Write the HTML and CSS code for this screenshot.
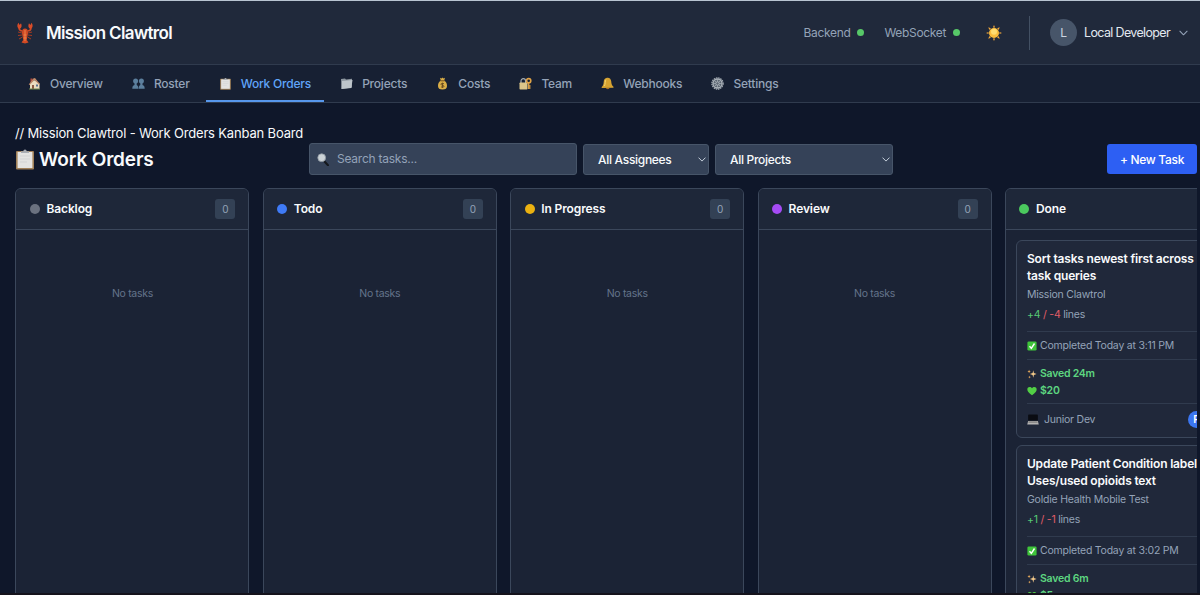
FILE: index.html
```html
<!DOCTYPE html>
<html lang="en">
<head>
    <meta charset="UTF-8">
    <meta name="viewport" content="width=device-width, initial-scale=1.0">
    <title>Mission Clawtrol</title>
    <link rel="stylesheet" href="styles.css">
</head>
<body>
    <!-- shared icons -->
    <svg class="defs" width="0" height="0">
        <symbol id="clipboard" viewBox="0 0 20 22">
            <rect x="1" y="3" width="18" height="18.5" rx="1" fill="#a08058"/>
            <rect x="2.6" y="4" width="14.8" height="16" fill="#e4e4e2"/>
            <path d="M5 8h10M5 11h10M5 14h7" stroke="#d3d4d4" stroke-width="1"/>
            <path d="M6 5V3.2h2.3a1.7 1.7 0 0 1 3.4 0H14V5z" fill="#a9adb3"/>
        </symbol>
        <symbol id="check" viewBox="0 0 12 12">
            <rect x=".5" y=".5" width="11" height="11" rx="1.6" fill="#3fc53a"/>
            <path d="M3 6.4l2.2 2.4L9 3" fill="none" stroke="#fff" stroke-width="1.7"/>
        </symbol>
        <symbol id="sparkles" viewBox="0 0 12 12">
            <path d="M7.500 1.500l.8 3.200L11.500 6l-3.200 1.300-.8 3.200-.8-3.200L3.500 6l3.200-1.300z" fill="#f3c98a"/>
            <path d="M2.500 1l.6 1.400 1.400.6-1.400.6L2.500 5l-.6-1.400L.5 3l1.400-.6zM3 8l.5 1.200 1.200.5-1.200.5L3 11.400l-.5-1.200-1.200-.5 1.200-.5z" fill="#e5a95a"/>
        </symbol>
        <symbol id="heart" viewBox="0 0 12 12">
            <path d="M6 11C2.500 8.500.4 6.300.4 4.100.4 1.100 4.300.3 6 2.800c1.700-2.500 5.600-1.700 5.600 1.300C11.600 6.300 9.500 8.500 6 11z" fill="#52cf45"/>
        </symbol>
        <symbol id="laptop" viewBox="0 0 13 12">
            <path d="M2 .5h9a.8.8 0 0 1 .8.8V7H1.200V1.300A.8.8 0 0 1 2 .5z" fill="#0a0c12"/>
            <path d="M1.200 7.500h10.600l1 4H.2z" fill="#b5b4b3"/>
            <path d="M1.500 8.800h10" stroke="#666" stroke-width="1"/>
        </symbol>
        <symbol id="chevron" viewBox="0 0 10 6">
            <path d="M1 1l4 4 4-4" fill="none" stroke="currentColor" stroke-width="1.200" stroke-linecap="round" stroke-linejoin="round"/>
        </symbol>
    </svg>

    <div class="page">
        <header class="header">
            <div class="brand">
                <svg class="lobster" viewBox="0 0 18 22">
                    <g fill="none" stroke="#a53a20" stroke-width="1">
                        <path d="M6 11L2 10M6 13l-4 .5M6.500 15L3 17M12 11l4-1M12 13l4 .5M11.500 15l3.500 2"/>
                        <path d="M6.500 9C4 9 3 7.500 3 5.500M11.500 9C14 9 15 7.500 15 5.500" stroke="#cf4a25" stroke-width="1.600"/>
                    </g>
                    <path d="M3.800 7C1 6 .7 3 2.500.7L3.600 3 5 1.200C6.200 3.500 5.600 6 3.800 7zM14.200 7c2.800-1 3.100-4 1.300-6.300L14.400 3 13 1.200c-1.200 2.300-.6 4.800 1.200 5.800z" fill="#d94c28"/>
                    <path d="M9 6.500c2 0 3 1.500 3 4 0 3-1 4-1.200 7.500l1.700 2.500L9 21.500l-3.500-1L7.200 18C7 14.500 6 13.500 6 10.500c0-2.500 1-4 3-4z" fill="#d24a24"/>
                    <path d="M9 8v11M7.500 13h3M7.500 16h3" stroke="#ee8248" stroke-width="1"/>
                </svg>
                <span class="brand-name">Mission Clawtrol</span>
            </div>
            <div class="header-right">
                <div class="status">Backend <span class="online"></span></div>
                <div class="status">WebSocket <span class="online"></span></div>
                <svg class="sun" viewBox="0 0 16 16">
                    <path d="M8 0l1.100 2.500H6.900zM8 16l1.100-2.500H6.900zM0 8l2.500-1.100v2.200zM16 8l-2.500-1.100v2.200zM2.300 2.300l2.600 1-1.600 1.600zM13.700 2.300l-2.600 1 1.600 1.600zM2.300 13.700l2.600-1-1.600-1.600zM13.700 13.700l-2.600-1 1.600-1.600z" fill="#f0a63a"/>
                    <circle cx="8" cy="8" r="5" fill="#fbbd3c"/>
                    <circle cx="8" cy="6.800" r="3" fill="#ffdc70"/>
                </svg>
                <div class="user">
                    <span class="avatar">L</span>
                    <span class="user-name">Local Developer</span>
                    <svg class="user-arrow"><use href="#chevron"/></svg>
                </div>
            </div>
        </header>

        <nav class="nav">
            <a class="tab">
                <svg viewBox="0 0 13 13"><path d="M2.500 1.500h2V5h-2z" fill="#b5493a"/><path d="M2 6.500L6 3l5.500 3.500V12H2z" fill="#eadcc0"/><path d="M.7 7.500L5.300 1.500 7 1l5 6.200-.8.5L6.500 3 1.500 8z" fill="#c08a69"/><path d="M4 8h2v4H4z" fill="#8c5a42"/><path d="M8 7.500h2v2H8z" fill="#59718e"/><path d="M1 11.500h11v1H1z" fill="#71884f"/></svg>
                <span>Overview</span>
            </a>
            <a class="tab">
                <svg viewBox="0 0 13 13"><g fill="#5c7f9d"><circle cx="3.600" cy="4" r="2.500"/><circle cx="9.400" cy="4" r="2.500"/><path d="M2.500 6h2.200v2c1 .4 1.600 1.200 1.600 3.700H.3c0-2.500.8-3.200 2.200-3.700zM8.300 6h2.200v2c1.400.5 2.200 1.200 2.200 3.700h-6c0-2.500.6-3.300 1.600-3.700z"/></g></svg>
                <span>Roster</span>
            </a>
            <a class="tab active">
                <svg><use href="#clipboard"/></svg>
                <span>Work Orders</span>
            </a>
            <a class="tab">
                <svg viewBox="0 0 13 13"><path d="M1 2l4-.5 1 1 6-.8v8.800L1.500 12z" fill="#8d969f"/><path d="M2 4l10.500-1L11.300 11 1.500 12z" fill="#bdc4ca"/></svg>
                <span>Projects</span>
            </a>
            <a class="tab">
                <svg viewBox="0 0 13 13"><path d="M4 .8l1.500.8L6.500.5l1 1L9 .8 8.200 3.500C10.500 5 11 7 11 9c0 2.500-1.500 3.500-4.500 3.500S2 11.500 2 9c0-2 .5-4 2.800-5.500z" fill="#d9ad47"/><path d="M4.500 3.800h4" stroke="#75521f"/><path d="M8 6.800C6.500 5.900 5 6.300 5 7.300c0 1.300 3 .7 3 2 0 1-1.700 1.300-3 .5M6.500 5.800v5" fill="none" stroke="#65491f" stroke-width=".9"/></svg>
                <span>Costs</span>
            </a>
            <a class="tab">
                <svg viewBox="0 0 13 13"><path d="M2 7V4a2.300 2.300 0 0 1 4.600 0v3" fill="none" stroke="#a7adb2" stroke-width="1.200"/><rect x=".5" y="5.500" width="8" height="7" rx=".7" fill="#dcc58a"/><circle cx="9.700" cy="3.700" r="2.100" fill="none" stroke="#e0a347" stroke-width="1.600"/><path d="M9.700 6v6M9.700 9h1.800M9.700 11h1.800" stroke="#e0a347" stroke-width="1.300"/></svg>
                <span>Team</span>
            </a>
            <a class="tab">
                <svg viewBox="0 0 13 13"><path d="M6 .8c2.500-.4 4 1.200 4.200 3.500.2 2.700.6 4.200 2.300 5.500v1L.7 11v-1c1.500-1.300 1.900-3 2-5C2.800 2.500 4 1.100 6 .8z" fill="#d7a331"/><path d="M5 11h3.500c-.3 1.600-3.200 1.600-3.500 0z" fill="#a56b25"/><path d="M5 2.500C4 4 4.300 7 3.500 9" fill="none" stroke="#f5d56e"/></svg>
                <span>Webhooks</span>
            </a>
            <a class="tab">
                <svg viewBox="0 0 13 13"><circle cx="6.500" cy="6.500" r="5.600" fill="none" stroke="#a3abb3" stroke-width="1.300" stroke-dasharray="1.500 .7"/><circle cx="6.500" cy="6.500" r="4.500" fill="#5d6773" stroke="#aab1b8" stroke-width="1.300"/><circle cx="6.500" cy="6.500" r="1.700" fill="none" stroke="#aab1b8"/><path d="M6.500 2v3M6.500 8v3M2 6.500h3M8 6.500h3M3.300 3.300l2 2M7.700 7.700l2 2M9.700 3.300l-2 2M5.300 7.700l-2 2" stroke="#a1aab3" stroke-width=".8"/></svg>
                <span>Settings</span>
            </a>
        </nav>

        <main class="main">
            <div class="crumb">// Mission Clawtrol - Work Orders Kanban Board</div>
            <div class="toolbar">
                <h1><svg><use href="#clipboard"/></svg>Work Orders</h1>
                <div class="search">
                    <svg viewBox="0 0 12 13"><path d="M7 8l4 4.300" stroke="#15181d" stroke-width="2" stroke-linecap="round"/><circle cx="4.700" cy="4.700" r="3.900" fill="#cbd2d6" stroke="#929ba3" stroke-width=".8"/></svg>
                    <span>Search tasks...</span>
                </div>
                <div class="select assignees"><span>All Assignees</span><svg><use href="#chevron"/></svg></div>
                <div class="select projects"><span>All Projects</span><svg><use href="#chevron"/></svg></div>
                <button type="button" class="new-task">+ New Task</button>
            </div>

            <div class="board">
                <section class="column">
                    <div class="column-head"><span class="dot gray"></span><h2>Backlog</h2><span class="count">0</span></div>
                    <p class="empty">No tasks</p>
                </section>
                <section class="column">
                    <div class="column-head"><span class="dot blue"></span><h2>Todo</h2><span class="count">0</span></div>
                    <p class="empty">No tasks</p>
                </section>
                <section class="column">
                    <div class="column-head"><span class="dot yellow"></span><h2>In Progress</h2><span class="count">0</span></div>
                    <p class="empty">No tasks</p>
                </section>
                <section class="column">
                    <div class="column-head"><span class="dot purple"></span><h2>Review</h2><span class="count">0</span></div>
                    <p class="empty">No tasks</p>
                </section>
                <section class="column">
                    <div class="column-head"><span class="dot green"></span><h2>Done</h2></div>
                    <div class="cards">
                        <article class="card">
                            <h3>Sort tasks newest first across<br>task queries</h3>
                            <p class="project">Mission Clawtrol</p>
                            <p class="lines"><span class="add">+4</span> <span class="del">/ -4</span> lines</p>
                            <div class="completed"><svg><use href="#check"/></svg>Completed Today at 3:11 PM</div>
                            <div class="saved">
                                <div><svg><use href="#sparkles"/></svg>Saved 24m</div>
                                <div><svg><use href="#heart"/></svg>$20</div>
                            </div>
                            <div class="owner"><svg><use href="#laptop"/></svg>Junior Dev<span class="badge">P</span></div>
                        </article>
                        <article class="card">
                            <h3>Update Patient Condition label<br>Uses/used opioids text</h3>
                            <p class="project">Goldie Health Mobile Test</p>
                            <p class="lines"><span class="add">+1</span> <span class="del">/ -1</span> lines</p>
                            <div class="completed"><svg><use href="#check"/></svg>Completed Today at 3:02 PM</div>
                            <div class="saved">
                                <div><svg><use href="#sparkles"/></svg>Saved 6m</div>
                                <div><svg><use href="#heart"/></svg>$5</div>
                            </div>
                        </article>
                    </div>
                </section>
            </div>
        </main>
    </div>
</body>
</html>
```
FILE: styles.css
```css
* {
	box-sizing: border-box;
}
body {
	margin: 0;
	background-color: #0f172a;
	color: #f8fafc;
	font-family: Inter, "Liberation Sans", sans-serif;
	font-size: 12px;
	overflow: hidden;
}
h1, h2, h3, p {
	margin: 0;
}
svg {
	flex: none;
}
.defs {
	display: block;
}
.page {
	height: 595px;
	display: flex;
	flex-direction: column;
	overflow: hidden;
	border-bottom: 2px solid #15131c;
}

/* header */
.header {
	height: 65px;
	flex: none;
	display: flex;
	align-items: center;
	justify-content: space-between;
	padding: 0 12px 0 16px;
	background-color: #20293b;
	border-top: 1px solid #b8c4d1;
	border-bottom: 1px solid #303b4e;
}
.brand, .header-right, .status, .user {
	display: flex;
	align-items: center;
}
.lobster {
	width: 18px;
	height: 22px;
	margin-right: 12px;
}
.brand-name {
	font-size: 17px;
	font-weight: 600;
	letter-spacing: -0.65px;
}
.status {
	gap: 7px;
	margin-right: 20px;
	color: #94a3b8;
	font-size: 12px;
	letter-spacing: -0.33px;
}
.online {
	width: 7px;
	height: 7px;
	border-radius: 50%;
	background-color: #57c868;
}
.sun {
	width: 16px;
	height: 16px;
	margin: 0 27px 0 6px;
}
.user {
	height: 34px;
	padding-left: 20px;
	border-left: 1px solid #435063;
}
.avatar {
	width: 27px;
	height: 27px;
	border-radius: 50%;
	background-color: #475569;
	color: #cbd5e1;
	line-height: 27px;
	text-align: center;
}
.user-name {
	margin: 0 9px 0 7px;
	color: #e2e8f0;
	font-size: 12.5px;
	letter-spacing: -0.65px;
}
.user-arrow {
	width: 9px;
	height: 6px;
	color: #94a3b8;
}

/* nav tabs */
.nav {
	height: 38px;
	flex: none;
	display: flex;
	gap: 3.2px;
	padding-left: 15px;
	background-color: #172033;
	border-bottom: 1px solid #303b4e;
}
.tab {
	display: flex;
	align-items: center;
	gap: 9px;
	padding: 2px 13px 0;
	color: #94a3b8;
	font-size: 12px;
	font-weight: 500;
	letter-spacing: -0.22px;
	border-bottom: 2px solid transparent;
}
.tab svg {
	width: 13px;
	height: 13px;
}
.tab.active {
	color: #60a5fa;
	border-bottom-color: #5797ec;
}

/* page title and filters */
.main {
	flex: 1;
	min-height: 0;
	width: 1197px;
	padding: 22px 0 0 15px;
	overflow: hidden;
}
.crumb {
	height: 18px;
	line-height: 17px;
	font-size: 13px;
	letter-spacing: -0.17px;
	white-space: nowrap;
}
.toolbar {
	height: 32px;
	display: flex;
	align-items: center;
}
h1 {
	width: 294px;
	display: flex;
	align-items: center;
	font-size: 19px;
	font-weight: 600;
	letter-spacing: -0.15px;
}
h1 svg {
	width: 20px;
	height: 22px;
	margin-right: 4px;
}
.search, .select {
	display: flex;
	align-items: center;
	background-color: #354258;
	border: 1px solid #475569;
	border-radius: 3px;
}
.search {
	width: 268px;
	height: 32px;
	padding-left: 7px;
	color: #94a3b8;
	letter-spacing: -0.24px;
}
.search svg {
	width: 12px;
	height: 13px;
	margin-right: 8px;
}
.search span {
	padding-bottom: 1px;
}
.select {
	height: 31px;
	justify-content: space-between;
	margin-left: 6px;
	padding: 0 2px 0 14px;
	font-weight: 500;
	letter-spacing: -0.3px;
}
.select svg {
	width: 8px;
	height: 5px;
	color: #cbd5e1;
}
.assignees {
	width: 126px;
}
.projects {
	width: 178px;
}
.new-task {
	width: 90px;
	height: 30px;
	margin-left: auto;
	padding: 0;
	border: none;
	border-radius: 3px;
	background-color: #2d5ff3;
	color: white;
	font-family: inherit;
	font-size: 12px;
	font-weight: 500;
	letter-spacing: -0.3px;
}

/* kanban board */
.board {
	display: flex;
	gap: 13.4px;
	height: 420px;
	margin: 13px 0 0 0.4px;
}
.column {
	width: 234px;
	flex: none;
	border: 1px solid #3b475b;
	border-radius: 6px;
	background-color: #1b2335;
}
.column-head {
	height: 41px;
	display: flex;
	align-items: center;
	padding: 0 13px 0 13.5px;
	border-bottom: 1px solid #3b475b;
	border-radius: 5px 5px 0 0;
	background-color: #1e2739;
}
.dot {
	width: 10px;
	height: 10px;
	margin-right: 6.5px;
	border-radius: 50%;
}
.gray { background-color: #6b7280; }
.blue { background-color: #3f7bf7; }
.yellow { background-color: #eab111; }
.purple { background-color: #a54bf5; }
.green { background-color: #4bc95e; }
h2 {
	padding-bottom: 1px;
	font-size: 12px;
	font-weight: 600;
	letter-spacing: -0.1px;
}
.count {
	width: 20px;
	height: 20px;
	margin-left: auto;
	border-radius: 3px;
	background-color: #334155;
	color: #94a3b8;
	font-size: 10px;
	line-height: 20px;
	text-align: center;
}
.empty {
	margin-top: 57px;
	color: #64748b;
	font-size: 10.5px;
	letter-spacing: -0.3px;
	line-height: 14px;
	text-align: center;
}

/* done cards */
.cards {
	padding: 10px;
}
.card {
	height: 198px;
	margin-bottom: 7px;
	padding: 9px 10px;
	border: 1px solid #3b475b;
	border-radius: 6px;
	background-color: #20283a;
	color: #94a3b8;
	font-size: 10.5px;
	letter-spacing: -0.22px;
	white-space: nowrap;
}
h3 {
	height: 36px;
	color: #f8fafc;
	font-size: 12px;
	font-weight: 600;
	line-height: 17px;
	letter-spacing: -0.18px;
}
.project {
	height: 18px;
	line-height: 18px;
}
.lines {
	height: 27px;
	line-height: 22px;
}
.add { color: #57c975; }
.del { color: #e05d67; }
.completed, .saved, .owner {
	width: 212px;
	border-top: 1px solid #303b4e;
}
.completed, .saved div, .owner {
	display: flex;
	align-items: center;
}
.completed {
	height: 28px;
}
.completed svg, .saved svg {
	width: 10px;
	height: 10px;
	margin-right: 3px;
}
.saved {
	height: 44px;
	padding-top: 5px;
	color: #5dd680;
	font-weight: 600;
}
.saved div {
	height: 17px;
}
.owner {
	height: 32px;
}
.owner svg {
	width: 12px;
	height: 11px;
	margin-right: 5px;
}
.badge {
	width: 17px;
	height: 17px;
	margin-left: auto;
	margin-right: 34px;
	border-radius: 50%;
	background-color: #3b76f0;
	color: white;
	font-weight: 600;
	line-height: 17px;
	text-align: center;
}
```
